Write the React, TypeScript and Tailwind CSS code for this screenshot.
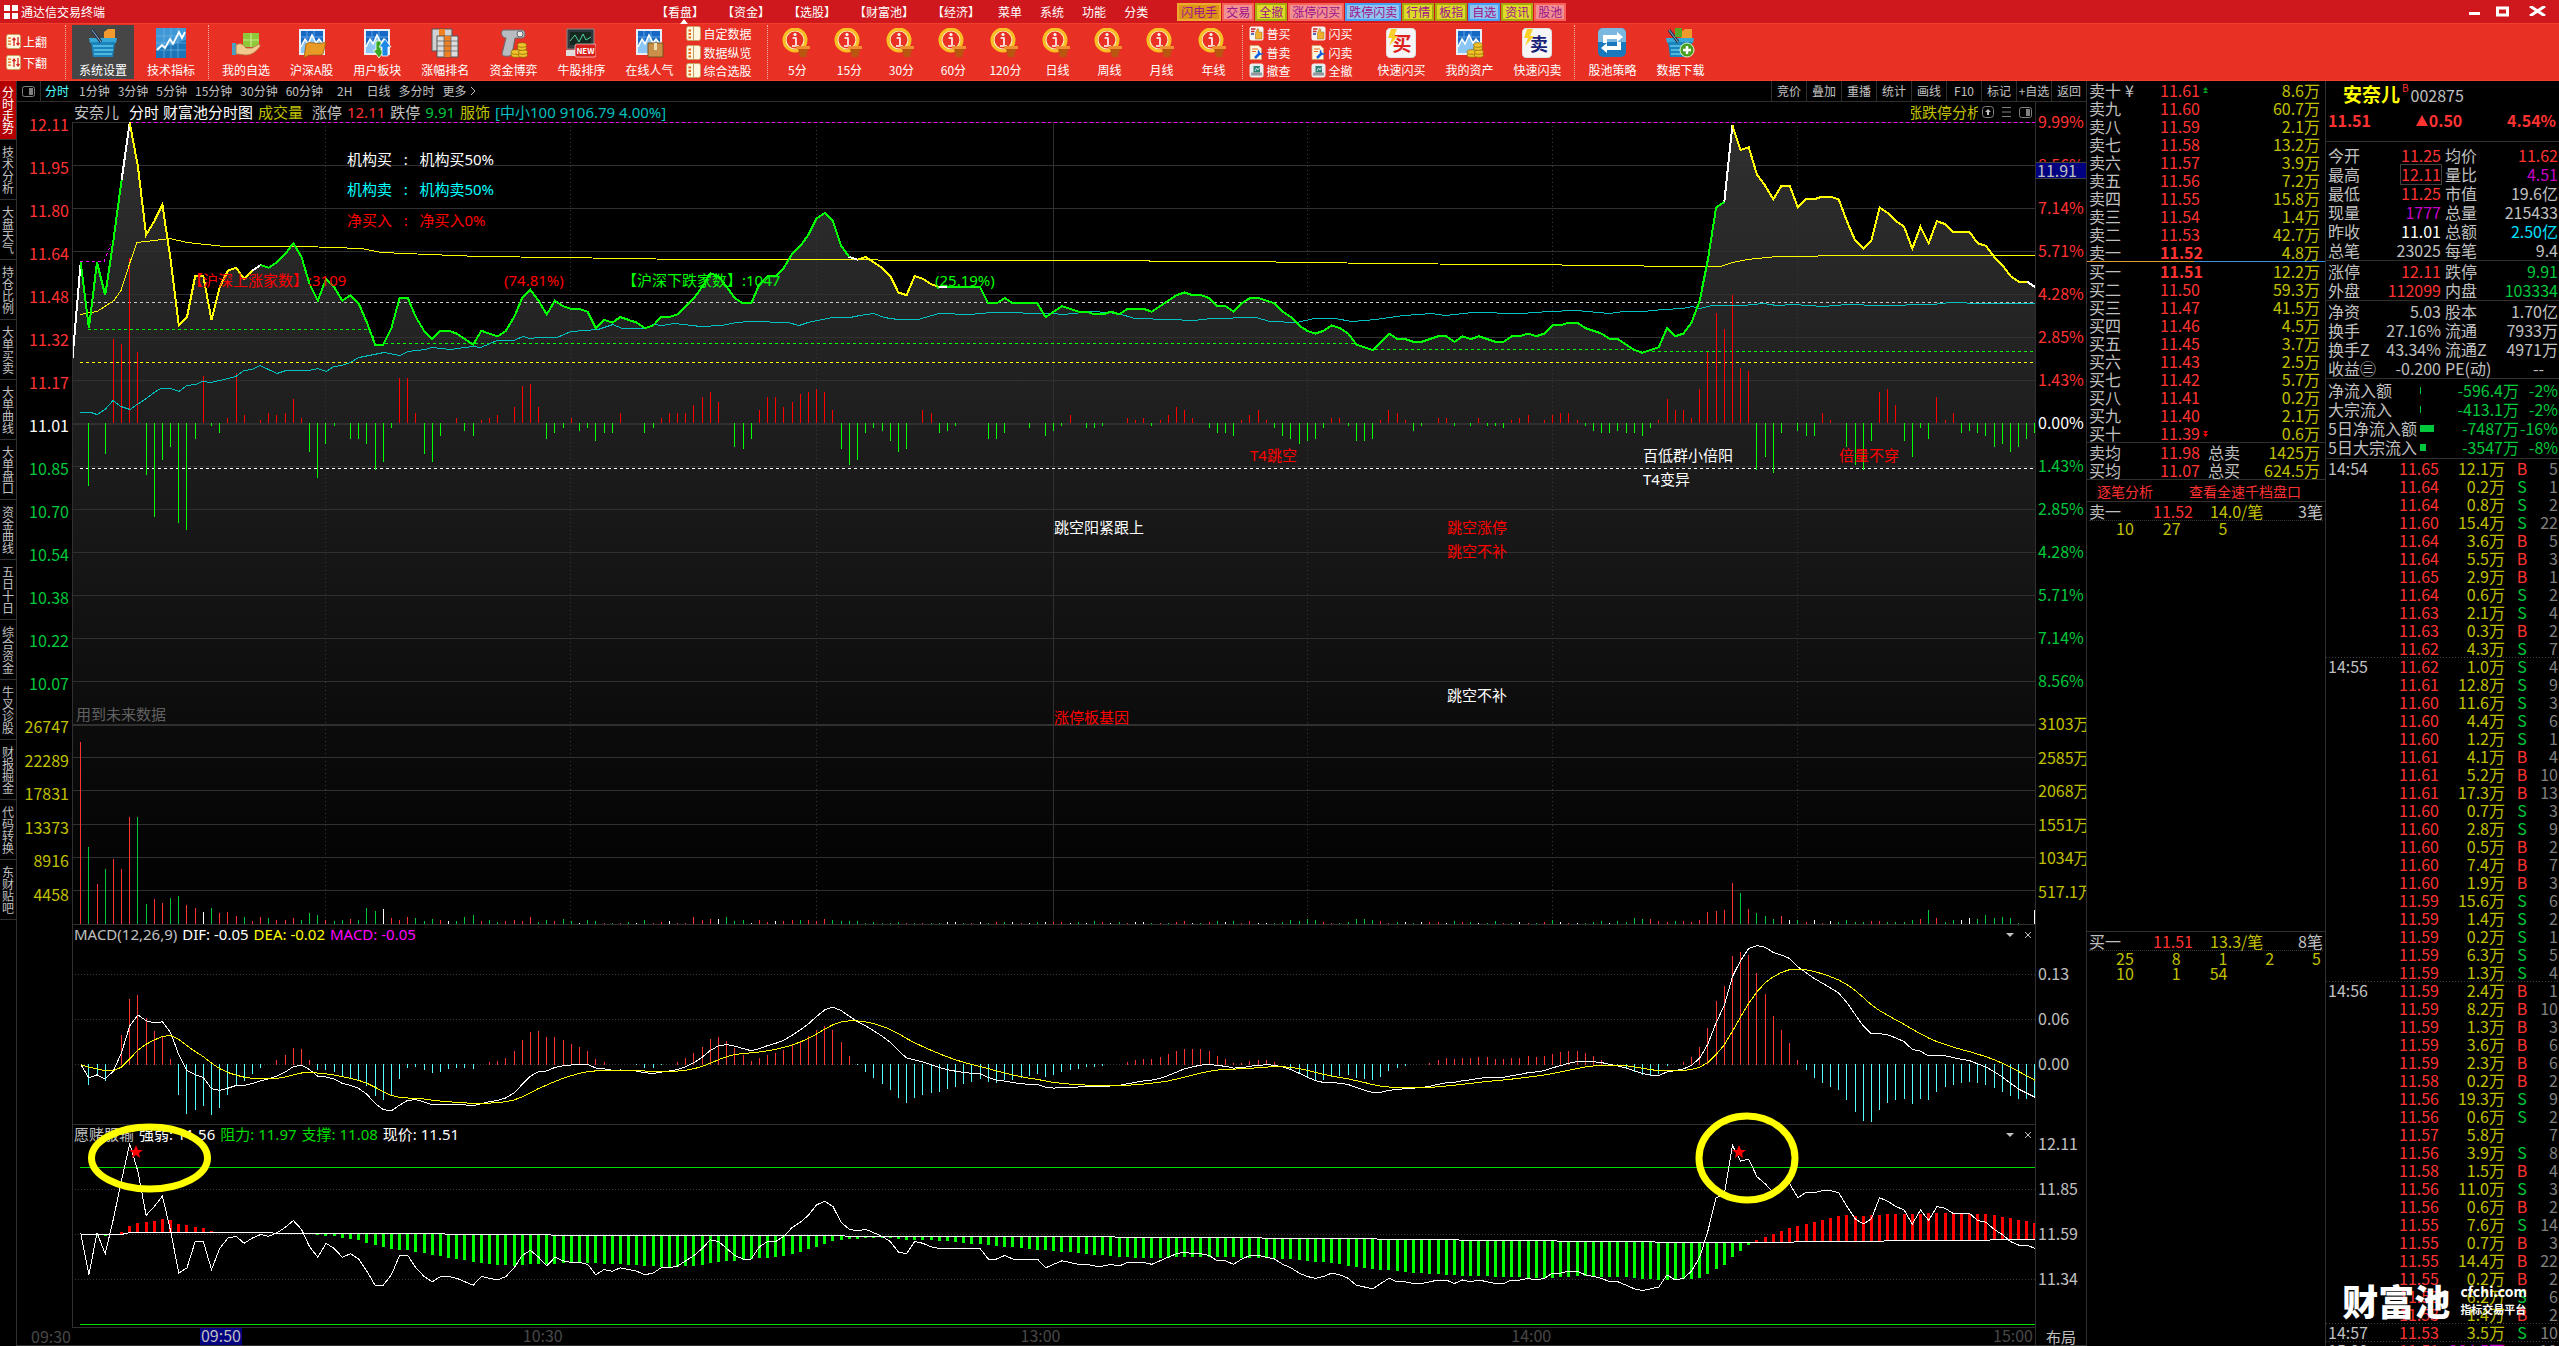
import type { ReactNode } from 'react';
import { clsx } from 'clsx';

// ---- chart data -----------------------------------------------------------

// minute closes from 09:30, in cents above 11.00
const CENTS = [
  25, 60, 36, 60, 48, 68, 90, 111, 95, 70, 75, 81, 61, 37, 40, 55, 55, 39, 51, 57,
  58, 54, 57, 59, 58, 60, 63, 67, 62, 52, 46, 54, 51, 46, 48, 45, 38, 30, 30, 36,
  47, 47, 40, 35, 32, 35, 35, 34, 32, 30, 35, 34, 33, 35, 40, 47, 50, 46, 41, 46,
  44, 43, 43, 42, 36, 39, 38, 40, 39, 38, 36, 37, 40, 40, 41, 44, 47, 51, 56, 55,
  51, 47, 45, 45, 52, 55, 55, 58, 63, 66, 70, 76, 78, 75, 66, 62, 61, 62, 60, 58,
  55, 49, 48, 55, 54, 52, 51, 51, 51, 51, 51, 51, 45, 45, 47, 45, 45, 45, 45, 40,
  42, 44, 43, 42, 42, 41, 41, 42, 41, 43, 43, 43, 42, 44, 46, 48, 49, 48, 48, 47,
  44, 44, 42, 45, 47, 47, 46, 45, 42, 40, 37, 35, 34, 35, 37, 36, 34, 30, 29, 28,
  31, 34, 32, 32, 31, 31, 32, 33, 33, 31, 33, 32, 33, 32, 31, 31, 33, 33, 34, 33,
  34, 37, 37, 38, 38, 36, 35, 34, 32, 32, 30, 28, 27, 28, 29, 36, 33, 34, 38, 46,
  61, 80, 82, 110, 101, 102, 92, 88, 83, 88, 88, 80, 83, 83, 84, 84, 83, 75, 68, 65,
  68, 80, 78, 75, 73, 65, 73, 67, 75, 74, 71, 71, 71, 67, 66, 62, 59, 55, 53, 53, 51,
];
const PRICE = CENTS.map((c) => 11 + c / 100);

// bar height and colour per minute, from 09:31
const VOLUME =
  '182r 77g 40r 55g 65r 55r 107r 107g 20g 25r 21r 26g 28g 19r 16r 12w 16g 11r 12r 8r 7g 3r 7r 6g 4r 4r 6r 4g 11g 9g ' +
  '4r 3g 4g 5r 4g 16g 13g 15w 6r 4r 7r 6g 3g 5g 4r 3w 3g 7g 9g 3r 4g 2g 3r 4r 3r 7r 2g 4g 3r 5g ' +
  '3g 1w 4g 3g 1r 1g 1r 2g 1w 4g 1r 2r 3w 1r 1r 7r 4r 5r 5w 7g 3g 4g 1w 4r 2r 3w 3r 4r 4g 4r ' +
  '3r 5r 4g 3g 3g 3g 1g 2g 1g 1g 2g 1r 1g 1r 1g 1g 2w 2w 1g 1r 2w 1g 2r 2g 2w 1r 1w 2g 2w 2r ' +
  '2r 1w 2g 1w 3g 2r 1w 2g 1r 2w 2w 1g 1r 1g 2r 3r 1w 1g 2r 3g 2w 3g 1r 3r 1w 1w 1g 2g 4g 3g ' +
  '5g 4g 2r 1r 1g 2g 5g 5g 4g 3r 1r 2g 2w 1g 2w 2r 2r 1w 3g 2r 2g 1w 1g 3g 1r 1g 2w 1r 1g 2r ' +
  '4g 2w 1r 1w 1g 2g 3g 1w 3g 2g 6g 5g 5r 3r 2r 3g 3r 2r 4r 12r 13r 14r 41r 31g 15r 11g 8g 5g 8r 4w ' +
  '4g 2r 4w 1r 3w 2g 4g 2g 2g 3r 3r 2g 2g 2g 4g 5r 14g 6r 2g 4g 4w 6w 5g 9g 6g 7g 6g 1g 0g 14w';

const AVG_LINE =
  '80,314 97,311 114,300 121,290 130,262 137,242 154,240 170,238 187,242 225,246 304,246 361,248 382,252 429,254 479,256 560,257 688,259 1060,260 1239,261 1383,263 1493,264 1630,265 1657,266 1720,266 1733,262 1747,259 1777,256 1860,255 2035,255';
const INDEX_LINE =
  '80,412 91,412 97,414 105,409 113,400 121,406 130,409 137,404 145,399 154,392 161,388 171,388 179,391 187,385 196,384 202,381 211,382 228,378 236,376 244,370 252,369 260,365 277,373 286,370 309,370 318,368 326,371 334,366 342,365 350,362 359,357 384,352 400,355 408,351 425,349 432,347 450,349 473,346 481,347 497,340 514,340 523,336 530,338 539,337 557,337 571,331 598,329 613,324 622,328 645,328 653,324 662,325 674,323 701,326 722,325 736,322 751,321 788,322 799,325 808,322 832,317 850,317 860,315 874,313 884,317 898,319 918,319 939,313 970,314 991,312 1053,313 1063,314 1094,311 1118,313 1135,318 1170,319 1194,320 1211,318 1256,317 1270,321 1297,322 1314,318 1335,318 1352,321 1376,319 1404,315 1432,313 1445,315 1473,312 1521,313 1549,311 1576,310 1610,313 1623,311 1643,311 1663,309 1683,308 1692,306 1700,308 1712,305 1743,305 1763,303 1777,305 1793,304 1823,306 1847,304 1880,305 1933,304 1950,302 1983,303 2035,303';

// [minute, y] knots of the base line and of the bar ends in the bottom pane
const BASE_KNOTS = [[0, 1234], [6, 1234], [7, 1232], [43, 1233], [48, 1234], [70, 1235], [119, 1236], [137, 1237], [154, 1238], [165, 1239], [175, 1240], [188, 1241], [200, 1242], [206, 1242], [214, 1241], [228, 1240], [240, 1239]];
const TREND_KNOTS = [
  [1, 1234], [2, 1235], [4, 1236], [5, 1235], [6, 1232], [7, 1226], [8, 1223], [9, 1222], [11, 1219], [12, 1220], [13, 1224], [16, 1228], [17, 1231], [18, 1232], [20, 1233], [28, 1233],
  [30, 1235], [32, 1236], [33, 1238], [35, 1240], [37, 1245], [39, 1249], [41, 1250], [44, 1255], [47, 1259], [50, 1263], [54, 1266], [56, 1264], [63, 1263], [66, 1264], [73, 1267],
  [76, 1266], [78, 1263], [83, 1259], [86, 1257], [88, 1254], [90, 1249], [92, 1244], [93, 1241], [95, 1239], [98, 1238], [100, 1238], [102, 1240], [105, 1240], [112, 1245], [120, 1251],
  [127, 1256], [131, 1258], [138, 1257], [147, 1258], [154, 1263], [158, 1268], [162, 1271], [166, 1274], [171, 1276], [180, 1278], [184, 1276], [190, 1277], [194, 1280], [198, 1279],
  [199, 1278], [200, 1274], [201, 1269], [202, 1265], [203, 1257], [204, 1251], [205, 1245], [206, 1240], [207, 1237], [210, 1228], [212, 1224], [216, 1216], [217, 1215], [219, 1216],
  [222, 1214], [230, 1213], [234, 1214], [237, 1218], [240, 1223],
];

const LEFT = 72;
const WIDTH = 1964;
const xAt = (i: number) => 72.5 + i * 8.177;
const yAt = (p: number) => 424 - (p - 11.01) * 274;
const pct = (x: number) => `${((x - LEFT) / WIDTH) * 100}%`;

function line(values: number[], y: (v: number) => number, from = 0, to = values.length - 1) {
  return values
    .slice(from, to + 1)
    .map((v, k) => `${xAt(from + k).toFixed(1)},${y(v).toFixed(1)}`)
    .join(' ');
}

function knotAt(knots: number[][], i: number) {
  const n = Math.max(1, knots.findIndex((k) => k[0] >= i));
  const [a, b] = [knots[n - 1], knots[n]];
  return a[1] + ((b[1] - a[1]) * (i - a[0])) / (b[0] - a[0]);
}

function macd(values: number[]) {
  let fast = values[1];
  let slow = values[1];
  let dea = 0;
  return values.map((v, i) => {
    if (i === 0) return { dif: 0, dea: 0 };
    fast += ((v - fast) * 2) / 13;
    slow += ((v - slow) * 2) / 27;
    dea += ((fast - slow - dea) * 2) / 10;
    return { dif: fast - slow, dea };
  });
}
const MACD = macd(PRICE);

const GRID_X = [325.5, 570.5, 816.5, 1307.5, 1552.5, 1797.5];

// ---- panel data -----------------------------------------------------------

const SIDE_TABS = ['分时走势', '技术分析', '大盘天气', '持仓比例', '大单买卖', '大单曲线', '大单盘口', '资金曲线', '五日十日', '综合资金', '牛叉诊股', '财报掘金', '代码转换', '东财贴吧'];

const SELLS = [['卖十', '11.61', '8.6万'], ['卖九', '11.60', '60.7万'], ['卖八', '11.59', '2.1万'], ['卖七', '11.58', '13.2万'], ['卖六', '11.57', '3.9万'], ['卖五', '11.56', '7.2万'], ['卖四', '11.55', '15.8万'], ['卖三', '11.54', '1.4万'], ['卖二', '11.53', '42.7万'], ['卖一', '11.52', '4.8万']];
const BUYS = [['买一', '11.51', '12.2万'], ['买二', '11.50', '59.3万'], ['买三', '11.47', '41.5万'], ['买四', '11.46', '4.5万'], ['买五', '11.45', '3.7万'], ['买六', '11.43', '2.5万'], ['买七', '11.42', '5.7万'], ['买八', '11.41', '0.2万'], ['买九', '11.40', '2.1万'], ['买十', '11.39', '0.6万']];

const TICKS = `14:54 11.65 12.1 B 5|. 11.64 0.2 S 1|. 11.64 0.8 S 2|. 11.60 15.4 S 22|. 11.64 3.6 B 5|. 11.64 5.5 B 3|. 11.65 2.9 B 1|. 11.64 0.6 S 2|. 11.63 2.1 S 4|. 11.63 0.3 B 2|. 11.62 4.3 S 7
14:55 11.62 1.0 S 4|. 11.61 12.8 S 9|. 11.60 11.6 S 3|. 11.60 4.4 S 6|. 11.60 1.2 S 1|. 11.61 4.1 B 4|. 11.61 5.2 B 10|. 11.61 17.3 B 13|. 11.60 0.7 S 3|. 11.60 2.8 S 9|. 11.60 0.5 B 2|. 11.60 7.4 B 7|. 11.60 1.9 B 3|. 11.59 15.6 S 6|. 11.59 1.4 S 2|. 11.59 0.2 S 1|. 11.59 6.3 S 5|. 11.59 1.3 S 4
14:56 11.59 2.4 B 1|. 11.59 8.2 B 10|. 11.59 1.3 B 3|. 11.59 3.6 B 6|. 11.59 2.3 B 6|. 11.58 0.2 B 2|. 11.56 19.3 S 9|. 11.56 0.6 S 2|. 11.57 5.8 . 7|. 11.56 3.9 S 8|. 11.58 1.5 B 4|. 11.56 11.0 S 3|. 11.56 0.6 B 2|. 11.55 7.6 S 14|. 11.55 0.7 B 3|. 11.55 14.4 B 22|. 11.55 0.2 B 2|. 11.53 6.2 S 6|. 11.53 1.4 B 2
14:57 11.53 3.5 S 10
15:00 11.51 204.5 . 101`
  .split(/[|\n]/)
  .map((row) => row.split(' ').map((c) => (c === '.' ? '' : c)));

const RED = 'text-[#ff3232]';
const GREEN = 'text-[#00c83c]';
const GRAY = 'text-[#c0c0c0]';
const GOLD = 'text-[#c0c000]';
const PURPLE = 'text-[#c800c8]';

const QUOTE_GROUPS: string[][][] = [
  [
    ['今开', '11.25', RED, '均价', '11.62', RED],
    ['最高', '12.11', RED, '量比', '4.51', PURPLE],
    ['最低', '11.25', RED, '市值', '19.6亿', GRAY],
    ['现量', '1777', PURPLE, '总量', '215433', GRAY],
    ['昨收', '11.01', 'text-white', '总额', '2.50亿', 'text-[#00e0ff]'],
    ['总笔', '23025', GRAY, '每笔', '9.4', GRAY],
  ],
  [
    ['涨停', '12.11', RED, '跌停', '9.91', GREEN],
    ['外盘', '112099', RED, '内盘', '103334', GREEN],
  ],
  [
    ['净资', '5.03', GRAY, '股本', '1.70亿', GRAY],
    ['换手', '27.16%', GRAY, '流通', '7933万', GRAY],
    ['换手Z', '43.34%', GRAY, '流通Z', '4971万', GRAY],
    ['收益㊂', '-0.200', GRAY, 'PE(动)', '--', GRAY],
  ],
];

// ---- icons ----------------------------------------------------------------

function Svg({ children, size = 30 }: { children: ReactNode; size?: number }) {
  return (
    <svg width={size} height={size} viewBox="0 0 30 30" aria-hidden="true" className="shrink-0">
      {children}
    </svg>
  );
}

const chartCard = (
  <>
    <path d="M2 1h26v26H2z" fill="#e8eef5" />
    <path d="M4 3h22v22H4z" fill="#1668c4" />
    <path d="M4 9h22M4 15h22M10 3v22M17 3v22" stroke="#5aa0e6" strokeWidth="1" />
    <path d="M4 19l4-8 3 5 4-9 4 8 3-4 4 5v9H4z" fill="#8cc6f5" />
    <path d="M4 19l4-8 3 5 4-9 4 8 3-4 4 5" fill="none" stroke="#fff" strokeWidth="1.5" />
  </>
);
const coins = (
  <g stroke="#8a6500" strokeWidth=".7" fill="#f0c22c">
    <ellipse cx="18" cy="27" rx="5" ry="2.3" />
    <ellipse cx="18" cy="24" rx="5" ry="2.3" />
    <ellipse cx="25" cy="27" rx="4.5" ry="2.3" />
    <ellipse cx="25" cy="24" rx="4.5" ry="2.3" />
    <ellipse cx="24" cy="20" rx="4.5" ry="2.3" />
    <ellipse cx="24" cy="17" rx="4.5" ry="2.3" />
  </g>
);
const basket = (
  <>
    <path d="M16 4l4-3h7v9H16z" fill="#f29a2e" />
    <path d="M1 10h28l-1 5H2z" fill="#35a8d8" />
    <path d="M3 14h24l-2 15H5z" fill="#1c84bd" />
    <path d="M5 18h20M6 22h19M6 26h18" stroke="#5fc8ec" strokeWidth="1.5" />
    <path d="M4 2l9 12" stroke="#20324a" strokeWidth="3" />
    <path d="M4 2l9 12" stroke="#8fb4cc" strokeWidth="1" />
  </>
);

const ICONS: Record<string, ReactNode> = {
  settings: basket,
  indicator: (
    <>
      <path d="M0 0h30v30H0z" fill="#1b74b8" />
      <path d="M0 0h30v12L0 22z" fill="#3f98d6" />
      <path d="M0 8h30M0 15h30M0 22h30M8 0v30M15 0v30M22 0v30" stroke="#7dbce8" strokeWidth=".6" />
      <path d="M1 22l5-5 3 3 5-9 3 5 6-12 3 6 3-6" fill="none" stroke="#fff" strokeWidth="1.8" />
    </>
  ),
  hand: (
    <>
      <path d="M12 5h16v14H12z" fill="#8fc93a" />
      <path d="M12 12h16M20 5v14" stroke="#c8ea8a" strokeWidth="1.2" />
      <path d="M1 15h4v12H1z" fill="#48a0c4" />
      <path d="M5 17c5-3 8 0 10 3h6l7-4c2 1 1 3-1 5-4 4-7 6-12 6-4 0-6-1-10-1z" fill="#f0c890" stroke="#a8743c" strokeWidth=".8" />
    </>
  ),
  stocks: (
    <>
      {chartCard}
      <path d="M9 16c5-4 9 2 20-2l-3 12c-7 3-11-2-19 4z" fill="#e89a24" stroke="#a05c08" strokeWidth=".8" />
    </>
  ),
  blocks: (
    <>
      {chartCard}
      <path d="M14 13h5v9h4l-6 8-6-8h3z" fill="#38a820" stroke="#fff" strokeWidth=".8" />
      <path d="M24 28h-4v-9h-3l6-8 6 8h-3v9z" fill="#1e8ae8" stroke="#fff" strokeWidth=".8" />
    </>
  ),
  rank: (
    <>
      <path d="M2 1h20v22H2z" fill="#d0d0d0" stroke="#555" />
      <path d="M9 1h6v22H9z" fill="#f08020" />
      <path d="M7 8h21v21H7z" fill="#dcdcdc" stroke="#555" />
      <path d="M14 8h7v21h-7z" fill="#f08020" />
      <path d="M7 13h21M7 18h21M7 23h21M14 8v21M21 8v21" stroke="#666" strokeWidth=".8" />
    </>
  ),
  scroll: (
    <>
      <path d="M6 2h18c4 0 4 8 0 8h-7l-3 16c-1 3-10 3-10 0L8 10c-5 0-6-8-2-8z" fill="#b8bcc0" stroke="#666a70" />
      <circle cx="22" cy="6" r="3" fill="#e8e8e8" stroke="#666" />
      {coins}
    </>
  ),
  monitor: (
    <>
      <path d="M1 1h27v20H1z" fill="#30383e" stroke="#888" />
      <path d="M4 4h21v13H4z" fill="#142820" />
      <path d="M4 13l5-6 4 7 4-8 3 6 5-3" fill="none" stroke="#58d0a0" />
      <path d="M0 22h12v6H0z" fill="#ddd" />
      <rect x="9" y="16" width="21" height="13" rx="2" fill="#d8201c" stroke="#fff" strokeWidth=".6" />
      <text x="19.5" y="26" textAnchor="middle" fontSize="8" fontWeight="700" fill="#fff">NEW</text>
    </>
  ),
  online: (
    <>
      {chartCard}
      <path d="M14 15h15v14H14z" fill="#c89048" stroke="#7a5018" />
      <path d="M20 15h3v7h-3z" fill="#f0e0b0" />
    </>
  ),
  period: (
    <>
      <circle cx="13" cy="12" r="11" fill="none" stroke="#f8c020" strokeWidth="3" />
      <circle cx="13" cy="12" r="9" fill="none" stroke="#fff4b0" strokeWidth="1.2" />
      <path d="M10.5 10h3.5v7m-4 1h7" fill="none" stroke="#fff" strokeWidth="1.6" />
      <circle cx="13" cy="6.5" r="1.6" fill="#fff" />
      <path d="M14 18h14v3H14z" fill="#f09030" />
      <path d="M16 21h10l-2 8h-6z" fill="#b85810" />
    </>
  ),
  buy: (
    <>
      <rect width="30" height="30" rx="5" fill="#f6f6f6" stroke="#ccc" />
      <text x="16" y="23" textAnchor="middle" fontSize="19" fontWeight="700" fill="#e02020">买</text>
      <path d="M5 1h6L8 8h4L3 18l3-8H2z" fill="#f8d028" />
    </>
  ),
  sell: (
    <>
      <rect width="30" height="30" rx="5" fill="#f6f6f6" stroke="#ccc" />
      <text x="17" y="23" textAnchor="middle" fontSize="18" fontWeight="700" fill="#182078">卖</text>
      <path d="M5 1h6L8 8h4L3 18l3-8H2z" fill="#f8d028" />
    </>
  ),
  assets: (
    <>
      {chartCard}
      {coins}
    </>
  ),
  pool: (
    <>
      <rect x="1" width="28" height="29" rx="5" fill="#1a78bc" />
      <path d="M1 5a5 5 0 0 1 5-5h18a5 5 0 0 1 5 5v9H1z" fill="#7ab8e0" />
      <path d="M6 15V7h14V4l6 5-6 5v-3H10v4zM24 14v8H10v3l-6-5 6-5v3h10v-4z" fill="#fff" />
    </>
  ),
  download: (
    <>
      {basket}
      <path d="M10 0h7v9h-7z" fill="#58a828" />
      <circle cx="22" cy="22" r="7" fill="#48a020" stroke="#e0f0d0" />
      <path d="M22 18v8M18 22h8" stroke="#fff" strokeWidth="2.5" />
    </>
  ),
  page: (
    <>
      <rect x="1" y="1" width="28" height="28" rx="4" fill="#fff6e0" stroke="#c8a060" strokeWidth="2" />
      <path d="M15 1v28" stroke="#c8a060" strokeWidth="2" />
      <path d="M5 7h5v4H5zM5 14h5v4H5zM5 21h5v4H5z" fill="#e86818" />
    </>
  ),
  flip: (
    <>
      <rect x="1" y="1" width="28" height="28" rx="4" fill="#fff6e0" stroke="#c8a060" strokeWidth="2" />
      <path d="M4 8h6M4 14h6M4 20h6" stroke="#e86818" strokeWidth="2.5" />
      <path d="M16 24V9m-3 3l3-4 3 4M24 6v15m-3-3l3 4 3-4" fill="none" stroke="#d02020" strokeWidth="2.5" />
    </>
  ),
  orderHand: (
    <>
      <rect x="1" y="1" width="28" height="28" rx="4" fill="#f4f4f4" />
      <path d="M4 6h9M4 11h7" stroke="#d02020" strokeWidth="3" />
      <path d="M4 16h6" stroke="#2040a0" strokeWidth="3" />
      <path d="M13 26V14l4-9 3 2-1 5h7v14z" fill="#f0b030" stroke="#a06810" />
    </>
  ),
  orderTool: (
    <>
      <path d="M2 1h17l6 6v22H2z" fill="#fff6e0" stroke="#c8a060" strokeWidth="1.5" />
      <path d="M6 8h12M6 13h8" stroke="#e86818" strokeWidth="2" />
      <path d="M12 26l9-9" stroke="#1060e0" strokeWidth="5" />
      <path d="M20 9a6 6 0 1 0 9 7l-5 1-3-3z" fill="#1060e0" />
    </>
  ),
  orderCancel: (
    <>
      <rect x="1" y="1" width="28" height="28" rx="5" fill="#e8ecee" />
      <path d="M9 6h13v13H9z" fill="#2c8078" />
      <path d="M12 16l3-6 3 4 3-5" fill="none" stroke="#fff" strokeWidth="1.5" />
      <path d="M5 19h20l2 6H3z" fill="#90989c" />
    </>
  ),
};

// ---- bars on top ----------------------------------------------------------

const CHIPS: [string, string][] = [
  ['闪电手', 'border-[#f0a830] bg-[#dc9418]'],
  ['交易', 'border-[#f86058] bg-[#f09090]'],
  ['全撤', 'border-[#a8a810] bg-[#dcdc28]'],
  ['涨停闪买', 'border-[#f86058] bg-[#f09090]'],
  ['跌停闪卖', 'border-[#48a0f0] bg-[#90c4f0]'],
  ['行情', 'border-[#a8a810] bg-[#dcdc28]'],
  ['板指', 'border-[#a8a810] bg-[#dcdc28]'],
  ['自选', 'border-[#48a0f0] bg-[#90c4f0]'],
  ['资讯', 'border-[#a8a810] bg-[#dcdc28]'],
  ['股池', 'border-[#f86058] bg-[#f09090]'],
];

function TitleBar() {
  return (
    <header className="flex h-[23px] shrink-0 items-center bg-[#cf181e] text-xs leading-none text-white">
      <h1 className="flex w-[656px] items-center gap-[3px] pl-1">
        <svg width="14" height="14" viewBox="0 0 14 14" aria-hidden="true">
          <path d="M0 0h6v6H0zM8 0h6v6H8zM0 8h6v6H0zM8 8h6v6H8z" fill="#fff" />
        </svg>
        通达信交易终端
      </h1>
      <nav className="flex items-center gap-[18px]">
        {['【看盘】', '【资金】', '【选股】', '【财富池】', '【经济】', '菜单', '系统', '功能', '分类'].map((m, i) => (
          <button key={m} type="button" className="relative whitespace-nowrap">
            {m}
            {i === 0 && <span className="absolute top-[13px] left-1/2 border-x-4 border-b-[5px] border-x-transparent border-b-white" />}
          </button>
        ))}
      </nav>
      <div className="ml-[29px] flex gap-px">
        {CHIPS.map(([label, tone]) => (
          <button key={label} type="button" className={clsx('h-[18px] border-2 px-[2px] leading-none whitespace-nowrap text-[#a0108c]', tone)}>
            {label}
          </button>
        ))}
      </div>
      <div className="mr-[13px] ml-auto flex items-start gap-[16px]">
        <button type="button" aria-label="最小化" className="pt-1.5">
          <svg width="11" height="3"><path d="M0 0h11v3H0z" fill="#fff" /></svg>
        </button>
        <button type="button" aria-label="最大化">
          <svg width="13" height="11"><path d="M1.5 2h10v7h-10z" fill="none" stroke="#fff" strokeWidth="3" /></svg>
        </button>
        <button type="button" aria-label="关闭" className="pl-1">
          <svg width="17" height="10"><path d="M1 0l15 10M16 0L1 10" stroke="#fff" strokeWidth="3" /></svg>
        </button>
      </div>
    </header>
  );
}

function Tool({ icon, label, active, width }: { icon: string; label: string; active?: boolean; width?: string }) {
  return (
    <button
      type="button"
      className={clsx('flex flex-col items-center gap-[3px] pt-[3px] whitespace-nowrap', width ?? 'px-[7px]', active && 'bg-[#464646]')}
    >
      <Svg>{ICONS[icon]}</Svg>
      <span className="leading-[18px]">{label}</span>
    </button>
  );
}

function SmallTools({ items, className }: { items: [string, string][]; className?: string }) {
  return (
    <div className={clsx('flex flex-col justify-between', className)}>
      {items.map(([icon, label]) => (
        <button key={label} type="button" className="flex items-center gap-[2px] leading-[17px] whitespace-nowrap">
          <Svg size={15}>{ICONS[icon]}</Svg>
          {label}
        </button>
      ))}
    </div>
  );
}

const Divider = () => <div className="border-l border-dotted border-[#f0b0a8]" />;

function Toolbar() {
  return (
    <div className="flex h-[58px] shrink-0 gap-1.5 border-y border-t-[#f0402c] border-b-[#f04030] bg-[#e83124] py-px text-xs text-white">
      <SmallTools items={[['flip', '上翻'], ['flip', '下翻']]} className="w-[59px] py-2 pl-1.5" />
      <Divider />
      <Tool icon="settings" label="系统设置" active />
      <Tool icon="indicator" label="技术指标" />
      <Divider />
      <Tool icon="hand" label="我的自选" />
      <Tool icon="stocks" label="沪深A股" />
      <Tool icon="blocks" label="用户板块" />
      <Tool icon="rank" label="涨幅排名" />
      <Tool icon="scroll" label="资金博弈" />
      <Tool icon="monitor" label="牛股排序" />
      <Tool icon="online" label="在线人气" />
      <SmallTools items={[['page', '自定数据'], ['page', '数据纵览'], ['page', '综合选股']]} className="w-[75px]" />
      <Divider />
      {['5分', '15分', '30分', '60分', '120分', '日线', '周线', '月线', '年线'].map((p) => (
        <Tool key={p} icon="period" label={p} width="w-[46px]" />
      ))}
      <Divider />
      <SmallTools items={[['orderHand', '普买'], ['orderTool', '普卖'], ['orderCancel', '撤查']]} className="w-[56px]" />
      <SmallTools items={[['orderHand', '闪买'], ['orderTool', '闪卖'], ['orderCancel', '全撤']]} className="w-[53px]" />
      <Tool icon="buy" label="快速闪买" />
      <Tool icon="assets" label="我的资产" />
      <Tool icon="sell" label="快速闪卖" />
      <Divider />
      <Tool icon="pool" label="股池策略" />
      <Tool icon="download" label="数据下载" />
    </div>
  );
}

function PanelIcon() {
  return (
    <svg width="13" height="11" viewBox="0 0 13 11" aria-hidden="true">
      <rect x=".5" y=".5" width="12" height="10" rx="2" fill="none" stroke="#808080" />
      <path d="M7 2h4v7H7z" fill="#808080" />
    </svg>
  );
}

function PeriodTabs() {
  return (
    <div className="flex h-[21px] items-stretch border-b border-[#2e2e2e] text-xs text-[#c0c0c0]">
      <button type="button" aria-label="侧栏" className="flex w-6 items-center justify-center border-r border-[#2e2e2e]">
        <PanelIcon />
      </button>
      <nav className="flex items-center gap-2 pl-1 whitespace-nowrap">
        {['分时', '1分钟', '3分钟', '5分钟', '15分钟', '30分钟', '60分钟', '2H', '日线', '多分时', '更多'].map((t) => (
          <button key={t} type="button" className={clsx(t === '分时' && 'mr-0.5 text-[#50ffff]', t === '2H' && 'mx-1.5')}>
            {t}
          </button>
        ))}
        <svg width="6" height="10" aria-hidden="true" className="-ml-1"><path d="M1 1l4 4-4 4" fill="none" stroke="#c0c0c0" /></svg>
      </nav>
      <div className="ml-auto flex">
        {['竞价', '叠加', '重播', '统计', '画线', 'F10', '标记', '+自选', '返回'].map((t) => (
          <button key={t} type="button" className="w-[35px] border-l border-[#2e2e2e] whitespace-nowrap">
            {t}
          </button>
        ))}
      </div>
    </div>
  );
}

// ---- chart panes ----------------------------------------------------------

function Pane({ top, height, label, children }: { top: number; height: number; label: string; children: ReactNode }) {
  return (
    <svg
      className="block w-full overflow-visible"
      height={height}
      viewBox={`${LEFT} ${top} ${WIDTH} ${height}`}
      preserveAspectRatio="none"
      shapeRendering="crispEdges"
      role="img"
      aria-label={label}
    >
      {children}
      <path d={`M72.5 ${top}v${height}M2035.5 ${top}v${height}`} stroke="#303030" />
      <path d={`M72 ${top + height - 0.5}h${WIDTH}`} stroke="#303030" />
    </svg>
  );
}

function GridX({ from, to }: { from: number; to: number }) {
  return (
    <>
      {GRID_X.map((x) => (
        <path key={x} d={`M${x} ${from}V${to}`} stroke="#383838" strokeDasharray="1 3" />
      ))}
      <path d={`M1053.5 ${from}V${to}`} stroke="#303030" />
    </>
  );
}

const SEGMENTS: [number, number, string][] = [
  [1, 6, '#0f0'],
  [7, 22, '#ff0'],
  [23, 95, '#0f0'],
  [96, 106, '#ff0'],
  [107, 202, '#0f0'],
  [203, 239, '#ff0'],
];

const NOTES: [number, number, string, string][] = [
  [347, 159, '机构买   :   机构买50%', 'text-white'],
  [347, 189, '机构卖   :   机构卖50%', 'text-[#00ffff]'],
  [347, 220, '净买入   :   净买入0%', 'text-[#ff0000]'],
  [188, 280, '【沪深上涨家数】:3109', 'text-[#ff0000]'],
  [504, 280, '(74.81%)', 'text-[#ff0000]'],
  [622, 280, '【沪深下跌家数】:1047', 'text-[#00ff00]'],
  [935, 280, '(25.19%)', 'text-[#00ff00]'],
  [1250, 455, 'T4跳空', 'text-[#ff0000]'],
  [1643, 455, '百低群小倍阳', 'text-white'],
  [1839, 455, '倍量不穿', 'text-[#ff0000]'],
  [1643, 479, 'T4变异', 'text-white'],
  [1054, 527, '跳空阳紧跟上', 'text-white'],
  [1447, 527, '跳空涨停', 'text-[#ff0000]'],
  [1447, 551, '跳空不补', 'text-[#ff0000]'],
  [1447, 695, '跳空不补', 'text-white'],
  [76, 714, '用到未来数据', 'text-[#606060]'],
  [1054, 717, '涨停板基因', 'text-[#ff0000]'],
];

function PricePane() {
  const area = `72,725 ${line(PRICE, yAt)} 2035,725`;
  return (
    <div className="relative">
      <Pane top={122} height={603} label="分时走势">
        <defs>
          <linearGradient id="area" gradientUnits="userSpaceOnUse" x1="0" y1="122" x2="0" y2="925">
            <stop offset="0" stopColor="#303030" />
            <stop offset="1" stopColor="#000" />
          </linearGradient>
        </defs>
        <polygon points={area} fill="url(#area)" />
        {Array.from({ length: 14 }, (_, k) => (
          <path key={k} d={`M72 ${122.5 + k * 43}h${WIDTH}`} stroke="#303030" strokeWidth={k === 7 ? 2 : 1} />
        ))}
        <GridX from={122} to={725} />
        <g fill="none" strokeDasharray="3 3">
          <path d="M130 122.5H2035" stroke="#f0f" />
          <path d="M80 261.5H104L111 244" stroke="#f0f" />
          <path d="M80 302.5H2035" stroke="#c8c8c8" />
          <path d="M88 329.5H368L374 338M385 343.5H1356M1375 349.5H1632M1652 351.5H2035" stroke="#0f0" />
          <path d="M80 362.5H2035" stroke="#ff0" />
          <path d="M80 468.5H2035" stroke="#fff" />
        </g>
        {PRICE.map((p, i) => {
          const d = (p - PRICE[Math.max(1, i - 3)]) * 262;
          if (i < 2 || Math.abs(d) < 1) return null;
          return <rect key={i} x={Math.floor(xAt(i))} y={d > 0 ? 423 - d : 423} width="1" height={Math.abs(d)} fill={d > 0 ? '#f00' : '#0f0'} />;
        })}
        <g fill="none" transform="translate(0 .5)">
          <polyline points={INDEX_LINE} stroke="#00c0c0" />
          <polyline points={AVG_LINE} stroke="#ff0" />
        </g>
        <polyline points={line(PRICE, yAt)} fill="none" stroke="#fff" strokeWidth="2" />
        {SEGMENTS.map(([a, b, color]) => (
          <polyline key={a} points={line(PRICE, yAt, a, b)} fill="none" stroke={color} strokeWidth="2" />
        ))}
      </Pane>
      {NOTES.map(([x, y, text, tone], i) => (
        <span key={i} className={clsx('absolute -translate-y-1/2 leading-5 whitespace-pre', tone)} style={{ left: pct(x), top: y - 122 }}>
          {text}
        </span>
      ))}
    </div>
  );
}

function VolumePane() {
  const colors: Record<string, string> = { r: '#ff3232', g: '#00c83c', w: '#fff' };
  return (
    <Pane top={725} height={200} label="成交量">
      <rect x="73" y="725" width="1962" height="199" fill="url(#area)" />
      <path d="M72 725.5h1964M72 757.5h1964M72 790.5h1964M72 824.5h1964M72 857.5h1964M72 890.5h1964" stroke="#303030" />
      <GridX from={725} to={925} />
      {VOLUME.split(' ').map((v, i) => {
        const h = parseInt(v, 10);
        return <rect key={i} x={Math.floor(xAt(i + 1))} y={924 - h} width="1" height={h} fill={colors[v.slice(-1)]} />;
      })}
    </Pane>
  );
}

function PaneTools() {
  return (
    <div className="absolute top-[5px] right-1 flex items-center gap-2.5">
      <button type="button" aria-label="指标菜单">
        <svg width="8" height="10"><path d="M0 3h8L4 7z" fill="#c0c0c0" /></svg>
      </button>
      <button type="button" aria-label="关闭指标">
        <svg width="8" height="10"><path d="M1 2l6 6M7 2L1 8" stroke="#c0c0c0" /></svg>
      </button>
    </div>
  );
}

function MacdPane() {
  const y = (v: number) => 1064.5 - v * 700;
  return (
    <div className="relative">
      <Pane top={925} height={200} label="MACD">
        <path d="M75 974.5H2035M75 1019.5H2035M75 1064.5H2035" stroke="#383838" strokeDasharray="1 2" />
        {MACD.map((m, i) => {
          const h = (m.dif - m.dea) * 1400;
          if (Math.abs(h) < 1) return null;
          return <rect key={i} x={Math.floor(xAt(i))} y={h > 0 ? 1065 - h : 1064} width="1" height={Math.abs(h)} fill={h > 0 ? '#ff3232' : '#54ffff'} />;
        })}
        <polyline points={line(MACD.map((m) => m.dif), y, 1)} fill="none" stroke="#fff" />
        <polyline points={line(MACD.map((m) => m.dea), y, 1)} fill="none" stroke="#ff0" />
      </Pane>
      <p className="absolute top-0 left-[2px] flex gap-[5px] leading-[18px]">
        <span className="text-[#c0c0c0]">MACD(12,26,9)</span>
        <span className="text-white">DIF: -0.05</span>
        <span className="text-[#ffff00]">DEA: -0.02</span>
        <span className="text-[#ff00ff]">MACD: -0.05</span>
      </p>
      <PaneTools />
    </div>
  );
}

const STAR = 'M0-7L2-2H7L3 1L4 6L0 3L-4 6L-3 1L-7-2H-2Z';

function StrengthPane() {
  const minutes = Array.from({ length: 240 }, (_, i) => i + 1);
  return (
    <div className="relative">
      <p className="absolute top-0 left-[2px] flex gap-[5px] leading-[18px]">
        <span className="text-[#c0c0c0]">愿赌服输</span>
        <span className="text-white">强弱: 11.56</span>
        <span className="text-[#00dc00]">阻力: 11.97</span>
        <span className="text-[#00dc00]">支撑: 11.08</span>
        <span className="text-white">现价: 11.51</span>
      </p>
      <div className="relative">
        <Pane top={1125} height={203} label="愿赌服输">
          <path d="M75 1189.5H2035M75 1234.5H2035M75 1279.5H2035" stroke="#383838" strokeDasharray="1 2" />
          <path d="M80 1167.5H2035M80 1324.5H2035" stroke="#00dc00" />
          {minutes.map((i) => {
            const base = Math.round(knotAt(BASE_KNOTS, i));
            const end = Math.round(knotAt(TREND_KNOTS, i));
            return <rect key={i} x={Math.floor(xAt(i)) - 1} y={Math.min(base, end)} width={i === 240 ? 2 : 3} height={Math.abs(end - base)} fill={end < base ? '#f00' : '#0f0'} />;
          })}
          <polyline points={minutes.map((i) => `${xAt(i)},${Math.round(knotAt(BASE_KNOTS, i)) + 0.5}`).join(' ')} fill="none" stroke="#fff" />
          <polyline points={line(PRICE, (p) => 1234.5 - (p - 11.59) * 175, 1)} fill="none" stroke="#fff" />
          <g fill="none" stroke="#ff0" strokeWidth="7" shapeRendering="auto">
            <ellipse cx="149.5" cy="1158" rx="58" ry="31" />
            <ellipse cx="1747" cy="1158" rx="48" ry="42" />
          </g>
          <g fill="#f00" shapeRendering="auto">
            <path d={STAR} transform="translate(136 1152)" />
            <path d={STAR} transform="translate(1739 1152)" />
          </g>
        </Pane>
      </div>
      <PaneTools />
    </div>
  );
}

function ChartTitle() {
  return (
    <div className="flex h-5 items-center border-r border-[#303030] pl-[2px] leading-5 whitespace-nowrap">
      <span className="mr-2.5 text-[#c0c0c0]">安奈儿</span>
      <h2 className="mr-[5px] text-white">分时 财富池分时图</h2>
      <p className="flex gap-[5px]">
        <span className={GOLD}>成交量</span>
        <span className="ml-1 text-[#c0c0c0]">涨停</span>
        <span className={RED}>12.11</span>
        <span className="text-[#c0c0c0]">跌停</span>
        <span className={GREEN}>9.91</span>
        <span className={GOLD}>服饰</span>
        <span className="text-[#00c0c0]">[中小100 9106.79 4.00%]</span>
      </p>
      <div className="mr-[3px] ml-auto flex items-center gap-2">
        <a href="#limit" className="-mr-1 flex w-[67px] justify-center overflow-hidden text-[#c0c000]">涨跌停分析</a>
        <svg width="12" height="12" aria-hidden="true">
          <rect x=".5" y=".5" width="11" height="11" rx="3" fill="none" stroke="#808080" />
          <path d="M6 3l3 3H7v3H5V6H3z" fill="#c0c0c0" />
        </svg>
        <svg width="9" height="10" aria-hidden="true"><path d="M0 .5h9M0 5h9M0 9.5h9" stroke="#808080" /></svg>
        <PanelIcon />
      </div>
    </div>
  );
}

const LEFT_PRICES = ['12.11', '11.95', '11.80', '11.64', '11.48', '11.32', '11.17', '11.01', '10.85', '10.70', '10.54', '10.38', '10.22', '10.07'];
const RIGHT_PCTS = ['9.99%', '8.56%', '7.14%', '5.71%', '4.28%', '2.85%', '1.43%', '0.00%', '1.43%', '2.85%', '4.28%', '5.71%', '7.14%', '8.56%'];
const tone = (i: number) => (i < 7 ? RED : i > 7 ? GREEN : 'text-white');

function LeftAxis() {
  return (
    <div className="w-[55px] shrink-0 pt-px pr-[3px] text-right text-base">
      {LEFT_PRICES.map((p, i) => (
        <p key={p} className={clsx('h-[43px] leading-[43px]', tone(i))}>{p}</p>
      ))}
      <div className={clsx('mt-[5px] flex h-[201px] flex-col justify-between', GOLD)}>
        {['26747', '22289', '17831', '13373', '8916', '4458'].map((v) => (
          <p key={v} className="leading-[33px]">{v}</p>
        ))}
      </div>
    </div>
  );
}

function RightAxis() {
  return (
    <div className="relative -mt-[2px] w-[50px] shrink-0 pl-[2px] text-base">
      {RIGHT_PCTS.map((p, i) => (
        <p key={i} className={clsx('h-[43px] leading-[43px]', tone(i))}>{p}</p>
      ))}
      <div className={clsx('mt-[5px] flex h-[201px] flex-col justify-between overflow-hidden', GOLD)}>
        {['3103万', '2585万', '2068万', '1551万', '1034万', '517.1万'].map((v) => (
          <p key={v} className="leading-[33px] whitespace-nowrap">{v}</p>
        ))}
      </div>
      <div className="mt-[43px] text-[#c0c0c0]">
        {['0.13', '0.06', '0.00'].map((v) => <p key={v} className="leading-[45px]">{v}</p>)}
      </div>
      <div className="mt-[35px] text-[#c0c0c0]">
        {['12.11', '11.85', '11.59', '11.34'].map((v) => <p key={v} className="leading-[45px]">{v}</p>)}
      </div>
      <p className="absolute inset-x-0 top-[62px] border-y border-[#404040] bg-[#000080] pl-px leading-[15px] text-[#c0c0c0]">11.91</p>
    </div>
  );
}

function TimeAxis() {
  return (
    <div className="flex h-[18px] border-b border-[#303030] text-base leading-[15px] text-[#484848]">
      <span className="w-[55px] border-t border-transparent pr-px text-right">09:30</span>
      <div className="relative flex-1">
        <span className="absolute h-[17px] bg-[#000080] px-px text-[#c0c0c0]" style={{ left: pct(200) }}>09:50</span>
        <span className="absolute" style={{ left: pct(523) }}>10:30</span>
        <span className="absolute" style={{ left: pct(1021) }}>13:00</span>
        <span className="absolute" style={{ left: pct(1512) }}>14:00</span>
        <span className="absolute right-[2px]">15:00</span>
      </div>
      <button type="button" className="w-[51px] border-l border-[#303030] text-[15px] text-[#c0c0c0]">布局</button>
    </div>
  );
}

// ---- right panels ---------------------------------------------------------

function BookRows({ rows, bold }: { rows: string[][]; bold: string }) {
  return (
    <table className="w-full table-fixed">
      <tbody>
        {rows.map(([name, price, vol]) => (
          <tr key={name} className="h-[18px]">
            <th className="w-[71px] text-left font-normal text-[#c0c0c0]">{name}{name === '卖十' && <span className="pl-1">¥</span>}</th>
            <td className={clsx(RED, name === bold && 'font-bold')}>
              <span className="flex items-center gap-[3px]">
                {price}
                {name === '卖十' && <svg width="5" height="7"><path d="M2.5 0L5 3H0zM2.5 3L5 6H0z" fill="#00a020" /></svg>}
                {name === '买十' && <svg width="5" height="7"><path d="M2.5 4L5 1H0zM2.5 7L5 4H0z" fill="#f00" /></svg>}
              </span>
            </td>
            <td className={clsx('text-right', GOLD)}>{vol}</td>
          </tr>
        ))}
      </tbody>
    </table>
  );
}

function QueueHead({ name, price, avg, count }: { name: string; price: string; avg: string; count: string }) {
  return (
    <div className="mx-[2px] flex h-[19px] border-b border-dotted border-[#383838] leading-[18px]">
      <span className="w-16 text-[#c0c0c0]">{name}</span>
      <span className={clsx('w-[57px]', RED)}>{price}</span>
      <span className={GOLD}>{avg}</span>
      <span className="ml-auto text-[#c0c0c0]">{count}</span>
    </div>
  );
}

function Queue({ items }: { items: string[] }) {
  return (
    <div className={clsx('grid grid-cols-5 pr-1 text-right leading-[15px]', GOLD)}>
      {items.map((n, i) => <span key={i}>{n}</span>)}
    </div>
  );
}

function OrderBook() {
  return (
    <section aria-label="买卖盘" className="flex w-[239px] shrink-0 flex-col border-l border-[#303030] text-base leading-[18px]">
      <div className="pr-[5px] pl-[2px]"><BookRows rows={SELLS} bold="卖一" /></div>
      <div className="flex h-px"><span className="w-[45%] bg-[#e0a030]" /><span className="flex-1 bg-[#3890e0]" /></div>
      <div className="pr-[5px] pl-[2px]"><BookRows rows={BUYS} bold="买一" /></div>
      <div className="border-y border-[#303030] pr-[5px] pl-[2px]">
        {[['卖均', '11.98', '总卖', '1425万'], ['买均', '11.07', '总买', '624.5万']].map(([a, b, c, d]) => (
          <div key={a} className="flex">
            <span className="w-[71px] text-[#c0c0c0]">{a}</span>
            <span className={clsx('w-12', RED)}>{b}</span>
            <span className="text-[#c0c0c0]">{c}</span>
            <span className={clsx('ml-auto', GOLD)}>{d}</span>
          </div>
        ))}
      </div>
      <div className={clsx('flex h-[22px] gap-9 border-b border-[#303030] pl-2.5 text-sm leading-5', RED)}>
        <button type="button">逐笔分析</button>
        <button type="button">查看全速千档盘口</button>
      </div>
      <div className="min-h-0 grow-[430] basis-0 overflow-hidden">
        <QueueHead name="卖一" price="11.52" avg="14.0/笔" count="3笔" />
        <Queue items={['10', '27', '5']} />
      </div>
      <div className="min-h-0 grow-[414] basis-0 overflow-hidden border-t border-[#303030]">
        <QueueHead name="买一" price="11.51" avg="13.3/笔" count="8笔" />
        <Queue items={['25', '8', '1', '2', '5', '10', '1', '54']} />
      </div>
    </section>
  );
}

function QuotePanel() {
  return (
    <section aria-label="行情" className="relative w-[234px] shrink-0 overflow-hidden border-l border-[#303030] text-base leading-[19px]">
      <div className="h-[61px] border-b border-[#303030]">
        <div className="flex h-[27px] pl-[17px]">
          <h2 className="text-[19px] leading-[26px] font-bold text-[#ffff00]">安奈儿</h2>
          <span className={clsx('px-[2px] text-[10px] leading-[14px]', RED)}>B</span>
          <span className="leading-[29px] text-[#c0c0c0]">002875</span>
        </div>
        <div className={clsx('flex justify-between pr-[3px] pl-[2px] leading-[24px] font-bold', RED)}>
          <span>11.51</span>
          <span className="flex items-center gap-px">
            <svg width="12" height="11" aria-hidden="true"><path d="M6 0l6 11H0z" fill="#ff3232" /></svg>
            0.50
          </span>
          <span>4.54%</span>
        </div>
      </div>
      {QUOTE_GROUPS.map((rows, g) => (
        <div key={g} className={clsx('border-b border-[#303030]', g === 0 ? 'pt-[4px]' : 'pt-px')}>
          {rows.map(([a, b, bt, c, d, dt]) => (
            <div key={a} className="grid grid-cols-2 gap-x-1 pr-px pl-[2px]">
              <p className="flex justify-between">
                <span className="text-[#c0c0c0]">{a}</span>
                <span className={clsx(bt, a === '最高' && 'outline outline-[#404040]')}>{b}</span>
              </p>
              <p className="flex justify-between">
                <span className="text-[#c0c0c0]">{c}</span>
                <span className={clsx(dt, d === '--' && 'pr-3.5')}>{d}</span>
              </p>
            </div>
          ))}
        </div>
      ))}
      <div className={clsx('border-b border-[#303030] pt-[2px] pr-px pb-px pl-[2px]', GREEN)}>
        {[['净流入额', 1, '-596.4万', '-2%'], ['大宗流入', 1, '-413.1万', '-2%'], ['5日净流入额', 14, '-7487万', '-16%'], ['5日大宗流入', 6, '-3547万', '-8%']].map(([a, w, v, p]) => (
          <div key={a} className="flex items-center">
            <span className="w-[92px] whitespace-nowrap text-[#c0c0c0]">{a}</span>
            <span className="h-[7px] bg-[#00c83c]" style={{ width: w }} />
            <span className="ml-auto">{v}</span>
            <span className="w-[39px] text-right">{p}</span>
          </div>
        ))}
      </div>
      <table className="w-full table-fixed leading-[18px]">
        <tbody>
          {TICKS.map(([time, price, vol, side, n], i) => (
            <tr key={i} className={clsx('h-[18px]', time && i > 0 && 'bg-[linear-gradient(90deg,#404040_33%,transparent_33%)] bg-[length:3px_1px] bg-repeat-x')}>
              <td className="w-[73px] pl-[2px] text-[#c0c0c0]">{time}</td>
              <td className={clsx('w-10', RED)}>{price}</td>
              <td className={clsx('w-[66px] text-right', time === '15:00' ? PURPLE : GOLD)}>{vol}万</td>
              <td className={clsx('w-[34px] text-center', side === 'B' ? RED : GREEN)}>{side}</td>
              <td className="pr-px text-right text-[#808080]">{n}</td>
            </tr>
          ))}
        </tbody>
      </table>
      <div className="absolute right-8 bottom-7 flex items-center gap-2.5 font-bold text-white">
        <span className="text-4xl leading-[36px] font-black">财富池</span>
        <span className="flex flex-col">
          <span className="text-[14px] leading-[18px]">cfchi.com</span>
          <span className="text-[11px] leading-[18px]">指标交易平台</span>
        </span>
      </div>
    </section>
  );
}

function SideTabs() {
  return (
    <nav className="w-[17px] shrink-0 border-r border-[#303030] text-xs leading-3 text-[#c0c0c0]">
      {SIDE_TABS.map((label, i) => (
        <button
          key={label}
          type="button"
          className={clsx('block w-full border-b border-[#303030] px-[2px] break-all', i === 0 ? 'h-[59px] bg-[#b40000] text-white' : 'h-[60px]')}
        >
          {label}
        </button>
      ))}
    </nav>
  );
}

export default function App() {
  return (
    <div className="flex h-screen flex-col overflow-hidden bg-black font-['Noto_Sans_CJK_SC','Noto_Sans',sans-serif]">
      <TitleBar />
      <Toolbar />
      <div className="flex min-h-0 flex-1">
        <SideTabs />
        <main className="min-w-0 flex-1">
          <PeriodTabs />
          <div className="flex">
            <LeftAxis />
            <div className="min-w-0 flex-1 font-['Noto_Sans','Noto_Sans_CJK_SC',sans-serif] text-[15px]">
              <ChartTitle />
              <PricePane />
              <VolumePane />
              <MacdPane />
              <StrengthPane />
            </div>
            <RightAxis />
          </div>
          <TimeAxis />
        </main>
        <OrderBook />
        <QuotePanel />
      </div>
    </div>
  );
}
